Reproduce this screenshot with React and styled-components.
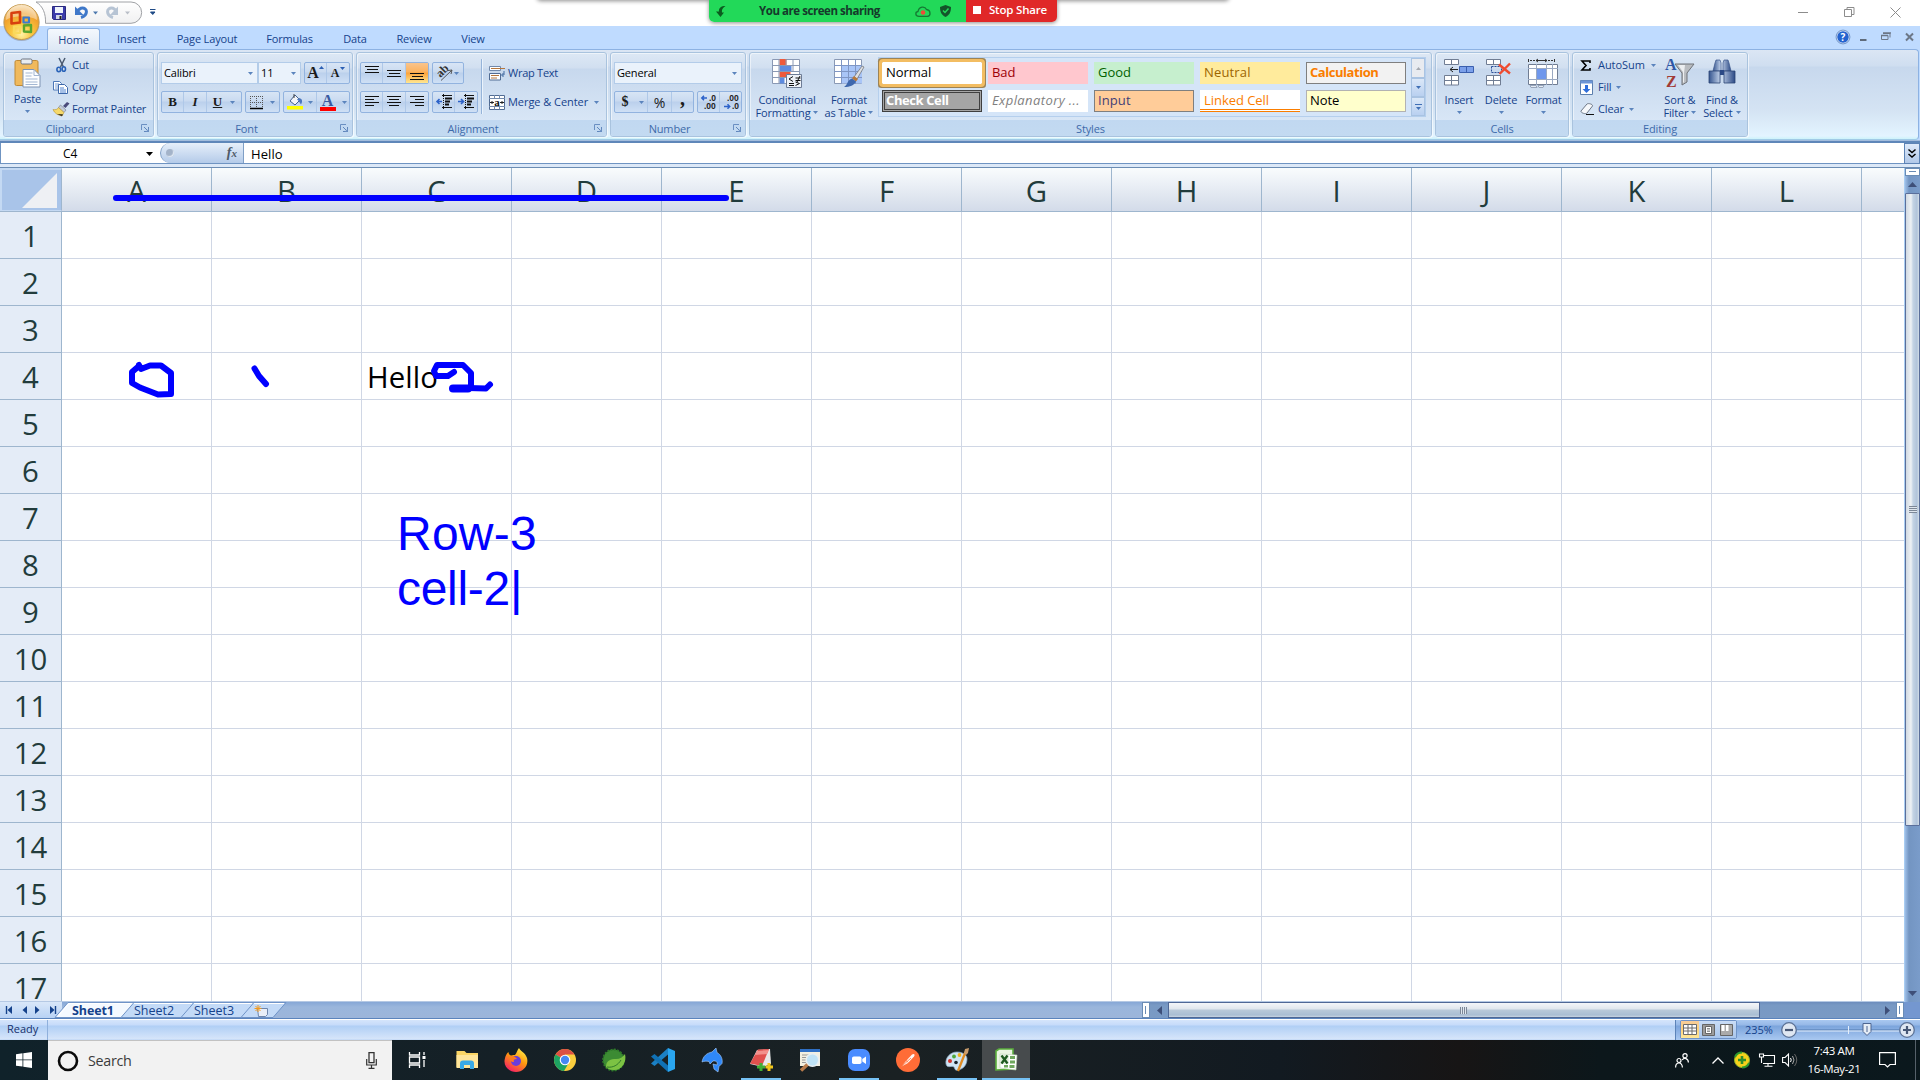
import React from "react";
import styled, { createGlobalStyle } from "styled-components";

const UI = `"Open Sans", "Noto Sans", sans-serif`;

const Global = createGlobalStyle`
  * { box-sizing: border-box; }
  body { margin: 0; background: #fff; overflow: hidden; font-family: ${UI}; }
  svg { display: block; flex: none; overflow: visible; }
`;

/* ---------- shell ---------- */
const Screen = styled.div`
  position: relative;
  width: 1920px;
  height: 1080px;
  display: flex;
  flex-direction: column;
  font-size: 11px;
  color: #15428b;
  overflow: hidden;
`;
const Label = styled.span`
  white-space: pre;
  line-height: 14px;
  letter-spacing: ${(p) => p.$ls ?? -0.15}px;
  color: ${(p) => p.$color || "inherit"};
`;

/* ---------- title bar ---------- */
const TitleBar = styled.div`
  height: 26px;
  flex: none;
  background: #fff;
  display: flex;
  align-items: flex-start;
  padding-left: 36px;
`;
const WindowControls = styled.div`
  margin-left: auto;
  display: flex;
  gap: 35px;
  padding: 7px 19px 0 0;
`;
const ShareShadow = styled.div`
  position: absolute;
  left: 538px;
  top: -6px;
  width: 690px;
  height: 6px;
  border-radius: 4px;
  box-shadow: 0 0 4px 1px rgba(0, 0, 0, 0.45);
`;
const ShareBar = styled.div`
  position: absolute;
  left: 709px;
  top: 0;
  height: 22px;
  width: 348px;
  display: flex;
  border-radius: 0 0 5px 5px;
  overflow: hidden;
  box-shadow: 0 1px 4px rgba(0, 0, 0, 0.45);
  font-size: 11.5px;
  font-weight: 600;
`;
const ShareGreen = styled.div`
  width: 257px;
  background: #22d959;
  display: flex;
  align-items: center;
  color: #153a2b;
  font-weight: 700;
  padding-left: 7px;
`;
const ShareText = styled.div`
  width: 161px;
  padding-left: 33px;
`;
const ShareRed = styled.div`
  flex: 1;
  background: #e02828;
  color: #fff;
  display: flex;
  align-items: center;
  padding: 0 0 2px 7px;
  gap: 8px;
`;
const StopSquare = styled.i`
  width: 8px;
  height: 8px;
  background: #fff;
`;
const OfficeButton = styled.div`
  position: absolute;
  left: 3px;
  top: 4px;
`;

/* ---------- ribbon ---------- */
const TabBar = styled.div`
  height: 23px;
  flex: none;
  background: #bfdbff;
  display: flex;
  align-items: flex-end;
  padding-left: 47px;
`;
const Tab = styled.div`
  height: 22px;
  width: ${(p) => p.$w}px;
  display: flex;
  align-items: center;
  justify-content: center;
  padding-top: ${(p) => (p.$active ? 0 : 1)}px;
  margin-bottom: ${(p) => (p.$active ? -1 : 0)}px;
  position: relative;
  z-index: 1;
  ${(p) =>
    p.$active &&
    `background: linear-gradient(#f4f8fd, #dde8f5); border: 1px solid #8db2e3; border-bottom: 0; border-radius: 3px 3px 0 0;`}
`;
const MdiControls = styled.div`
  margin-left: auto;
  display: flex;
  align-items: center;
  gap: 11px;
  padding-right: 6px;
  height: 24px;
`;
const HelpBadge = styled.div`
  margin-right: -2px;
`;
const MdiGlyph = styled.div`
  margin-left: 3px;
`;
const RibbonWrap = styled.div`
  height: 94px;
  flex: none;
  background: linear-gradient(#bfdbff 0 91px, #a3bddd 91px);
  border-bottom: 2px solid #5f87b9;
`;
const Ribbon = styled.div`
  width: 1919px;
  height: 91px;
  border: 1px solid #8db2e3;
  border-left: 0;
  border-bottom-color: #a0cbe6;
  border-radius: 0 4px 4px 0;
  background: linear-gradient(#dbe6f4, #cfdef0 16px, #c7d8ed 17px, #d4e3f3 60px, #e3f4ff 86px, #cdf3fb);
  padding: 2px 0 0 3px;
  display: flex;
  gap: 3px;
`;
const GroupBox = styled.div`
  width: ${(p) => p.$w}px;
  height: 85px;
  border: 1px solid #a9c3de;
  border-radius: 3px;
  box-shadow: inset 1px 1px 0 rgba(255, 255, 255, 0.5), 1px 1px 0 rgba(255, 255, 255, 0.6);
  background: linear-gradient(#dde8f5, #d1dff0 15px, #c7d8ed 16px, #d8e6f6 68px);
  display: flex;
  flex-direction: column;
  overflow: hidden;
`;
const GroupBody = styled.div`
  flex: 1;
  display: flex;
  padding-left: ${(p) => p.$pl || 0}px;
`;
const GroupFooter = styled.div`
  height: 16px;
  background: linear-gradient(#c1d8f1, #c3daf1);
  color: #3e6aaa;
  display: flex;
  align-items: center;
  padding-right: 4px;
`;
const FooterName = styled.div`
  flex: 1;
  text-align: center;
  padding-left: ${(p) => (p.$launcher ? 0 : 4)}px;
  padding-right: ${(p) => (p.$launcher ? 5 : 0)}px;
`;
const BigButton = styled.div`
  width: ${(p) => p.$w}px;
  padding-top: ${(p) => p.$pt ?? 5}px;
  margin-left: ${(p) => p.$ml || 0}px;
  display: flex;
  flex-direction: column;
  align-items: center;
`;
const BigIcon = styled.div`
  height: 32px;
  margin-bottom: 2px;
`;
const BigLine = styled.div`
  height: 13px;
  display: flex;
  align-items: center;
  gap: 3px;
  white-space: nowrap;
`;
const SmallRows = styled.div`
  display: grid;
  grid-auto-rows: 22px;
  padding-top: 1px;
  align-content: start;
  margin-left: ${(p) => p.$ml || 0}px;
`;
const SmallRow = styled.div`
  display: flex;
  align-items: center;
  height: 22px;
`;
const IconSlot = styled.div`
  width: ${(p) => p.$w || 20}px;
  display: flex;
  justify-content: flex-start;
`;
const Controls = styled.div`
  display: flex;
  flex-direction: column;
  gap: 7px;
  padding-top: 9px;
`;
const ControlRow = styled.div`
  display: flex;
  gap: ${(p) => p.$gap ?? 3}px;
  height: 22px;
`;
const Combo = styled.div`
  width: ${(p) => p.$w}px;
  height: 22px;
  background: #eaf2fb;
  border: 1px solid #b3cce9;
  margin-right: ${(p) => p.$mr || 0}px;
  color: #000;
  display: flex;
  align-items: center;
  justify-content: space-between;
  padding: 0 4px 0 2px;
`;
const ButtonGroup = styled.div`
  display: flex;
  height: 22px;
  border: 1px solid #92b3df;
  border-radius: 2px;
  background: linear-gradient(#d8e5f5, #c9daf0 9px, #bbd0ec 10px, #cfe0f5);
`;
const ToolButton = styled.div`
  width: ${(p) => p.$w}px;
  display: flex;
  align-items: center;
  justify-content: center;
  gap: ${(p) => p.$gap ?? 4}px;
  padding-left: ${(p) => p.$pl || 0}px;
  padding-bottom: ${(p) => p.$pb || 0}px;
  border-right: 1px solid #afc8e8;
  color: #1b1b1b;
  font: ${(p) => p.$font || "bold 13px 'Liberation Serif', serif"};
  background: ${(p) => (p.$on ? "linear-gradient(#f9c48d, #fdb25c 9px, #fca33a 10px, #ffe791)" : "none")};
  &:last-child { border-right: 0; }
`;
const Divider = styled.div`
  width: 2px;
  height: 55px;
  margin: 6px 6px 0 3px;
  background: #96b4d9;
  border-right: 1px solid #eaf3fc;
`;
const WrapColumn = styled.div`
  display: flex;
  flex-direction: column;
  gap: 7px;
  padding-top: 9px;
`;
const Gallery = styled.div`
  display: flex;
  width: 548px;
  height: 60px;
  margin: 4px 0 0 1px;
  background: #d5e5f8;
  border: 1px solid #b5cfed;
`;
const Swatches = styled.div`
  display: grid;
  grid-template-columns: repeat(5, 100px);
  grid-auto-rows: 22px;
  gap: 6px;
  padding: 4px 0 0 3px;
  width: 532px;
  font-size: 13px;
`;
const Swatch = styled.div`
  background: ${(p) => p.$bg};
  color: ${(p) => p.$fg};
  border: ${(p) => p.$border || "1px solid transparent"};
  outline: ${(p) => p.$outline || "none"};
  box-shadow: ${(p) => p.$shadow || "none"};
  border-radius: ${(p) => p.$radius || 0}px;
  font-weight: ${(p) => p.$weight || 400};
  font-style: ${(p) => p.$style || "normal"};
  padding: 0 0 ${(p) => p.$pb ?? 2}px ${(p) => p.$pl ?? 3}px;
  display: flex;
  align-items: center;
  white-space: nowrap;
  line-height: 18px;
`;
const GalleryScroll = styled.div`
  width: 14px;
  display: grid;
  grid-template-rows: 20px 19px 19px;
`;
const ScrollCell = styled.div`
  border: 1px solid #a9c3e2;
  background: ${(p) => (p.$off ? "#e8ebf0" : "linear-gradient(#dbe8f8, #b9d0f0)")};
  display: flex;
  align-items: center;
  justify-content: center;
`;

/* ---------- formula bar ---------- */
const FormulaBar = styled.div`
  height: 25px;
  flex: none;
  background: #dce8f7;
  border-bottom: 1px solid #6b8cb3;
  padding-bottom: 3px;
  display: flex;
`;
const NameBox = styled.div`
  width: 160px;
  background: #fff;
  border-left: 1px solid #6f94c2;
  border-bottom: 1px solid #6f94c2;
  color: #000;
  display: flex;
  align-items: center;
  font-size: 12px;
  padding: 2px 7px 0 62px;
  justify-content: space-between;
`;
const FxArea = styled.div`
  width: 84px;
  background: #fff;
  border-bottom: 1px solid #6f94c2;
`;
const FxPill = styled.div`
  width: 84px;
  height: 20px;
  border: 1px solid #7f9fc6;
  border-width: 0 1px 0 1px;
  border-radius: 10px 0 0 10px;
  background: linear-gradient(#e6effa, #b4cbe9);
  display: flex;
  align-items: center;
  justify-content: space-between;
  padding: 0 6px 0 5px;
  font: italic bold 14px "Liberation Serif", serif;
  color: #4f5a68;
`;
const FxSub = styled.span`
  font-size: 11px;
`;
const FxDot = styled.i`
  width: 8px;
  height: 8px;
  border-radius: 50%;
  background: #a3b3c9;
  box-shadow: inset -1px -1px 1px #e3ebf5;
`;
const FormulaInput = styled.div`
  flex: 1;
  background: #fff;
  border-bottom: 1px solid #6f94c2;
  color: #000;
  font-size: 13px;
  display: flex;
  align-items: center;
  padding: 1px 0 0 7px;
`;
const ExpandButton = styled.div`
  width: 16px;
  height: 21px;
  border: 1px solid #5d83b5;
  background: linear-gradient(#dfeafa, #b1c8e8);
  display: flex;
  align-items: center;
  justify-content: center;
`;

/* ---------- sheet ---------- */
const SheetArea = styled.div`
  height: 834px;
  flex: none;
  display: flex;
`;
const Grid = styled.div`
  width: 1904px;
  height: 834px;
  overflow: hidden;
  font-size: 29.33px;
  color: #223c3c;
  border-bottom: 1px solid #b5c9e4;
`;
const HeaderRow = styled.div`
  display: flex;
  height: 44px;
  background: linear-gradient(#f9fcfd, #d3dbe9);
  border-bottom: 1px solid #9eb6ce;
`;
const Corner = styled.div`
  width: 62px;
  border: 2px solid #c4d9f3;
  border-bottom-width: 1px;
  background: #a9c4e9;
  border-right: 1px solid #9eb6ce;
`;
const ColumnHead = styled.div`
  width: 150px;
  flex: none;
  border-right: 1px solid #9eb6ce;
  display: flex;
  align-items: center;
  justify-content: center;
  line-height: 40px;
  padding-top: 2px;
`;
const GridRow = styled.div`
  display: flex;
  height: 47px;
`;
const RowHead = styled.div`
  width: 62px;
  flex: none;
  background: #e4ecf7;
  border-right: 1px solid #9eb6ce;
  border-bottom: 1px solid #9eb6ce;
  display: flex;
  align-items: center;
  justify-content: center;
  line-height: 38px;
  padding-top: 1px;
`;
const Cell = styled.div`
  width: 150px;
  flex: none;
  border-right: 1px solid #d0d7e5;
  border-bottom: 1px solid #d0d7e5;
  background: #fff;
  color: #000;
  padding: 1px 0 0 5px;
  display: flex;
  align-items: center;
  line-height: 38px;
  letter-spacing: 0.1px;
`;
const VScroll = styled.div`
  width: 16px;
  background: linear-gradient(90deg, #9ebfe8, #7395c2 4px, #7a9cca);
  display: flex;
  flex-direction: column;
  align-items: center;
  border-left: 1px solid #a9cdf2;
`;
const VSplit = styled.div`
  width: 15px;
  height: 8px;
  border: 1px solid #6a8cb5;
  background: #fff;
  padding: 2px 3px;
  display: flex;
  &::after { content: ""; flex: 1; border: 1px solid #6a8cb5; border-width: 1px 0 0; }
`;
const ArrowSlot = styled.div`
  height: ${(p) => p.$h}px;
  width: ${(p) => p.$w}px;
  display: flex;
  align-items: center;
  justify-content: center;
`;
const VThumb = styled.div`
  width: 15px;
  height: 633px;
  border: 1px solid #5b6f9b;
  border-radius: 1px;
  background: linear-gradient(90deg, #d2dae2, #edf1f5 5px, #c4d3e4 7px, #b0c3da 11px, #d5dfe9);
  display: flex;
  align-items: center;
  justify-content: center;
`;
const GripV = styled.i`
  width: 8px;
  height: 7px;
  background: repeating-linear-gradient(#7c8797 0 1px, #dfe6ee 1px 2px);
`;
const GripH = styled.i`
  width: 7px;
  height: 7px;
  margin-right: 1px;
  background: repeating-linear-gradient(90deg, #7c8797 0 1px, #dfe6ee 1px 2px);
`;

/* ---------- sheet tabs ---------- */
const TabStrip = styled.div`
  height: 17px;
  flex: none;
  display: flex;
  background: linear-gradient(#86a7d6, #9ab6dc 5px, #9cb5da);
  border-bottom: 1px solid #5b84bd;
  font-size: 12.5px;
`;
const SheetNav = styled.div`
  width: 62px;
  display: flex;
  align-items: center;
  justify-content: space-between;
  padding: 0 5px;
  background: linear-gradient(#d9e7f9, #b8d2f4);
`;
const SheetTab = styled.div`
  position: relative;
  width: ${(p) => p.$w}px;
  display: flex;
  align-items: center;
  padding: 1px 0 0 ${(p) => p.$pl}px;
  font-weight: ${(p) => (p.$on ? 700 : 400)};
  z-index: ${(p) => p.$z};
`;
const TabShape = styled.svg`
  position: absolute;
  left: 0;
  top: 0;
  z-index: -1;
`;
const HScroll = styled.div`
  margin-left: auto;
  width: 778px;
  height: 16px;
  display: flex;
  background: linear-gradient(#6c8cbc, #7899c4 3px, #7a9ac4);
`;
const HSplit = styled.div`
  width: 8px;
  border: 1px solid #6a8cb5;
  background: #fff;
  padding: 3px 0 3px 2px;
  display: flex;
  &::after { content: ""; width: 1px; background: #6a8cb5; }
`;
const HThumb = styled.div`
  width: 592px;
  border: 1px solid #4f6795;
  background: linear-gradient(#f4f6f9, #e0e6ed 6px, #b9c9d9 7px, #a9bdd3 12px, #c8d4e1);
  display: flex;
  align-items: center;
  justify-content: center;
`;
const CornerFill = styled.div`
  width: 16px;
  background: #7497d0;
`;

/* ---------- status bar ---------- */
const StatusBar = styled.div`
  height: 21px;
  flex: none;
  display: flex;
  border-top: 1px solid #fff;
  background: linear-gradient(#d5e5fb, #c6dbfa 5px, #b0cff5 6px, #d6e5fa 19px, #b9d2f3 20px);
`;
const StatusText = styled.div`
  width: 48px;
  padding: 0 0 2px 7px;
  color: #15306b;
  display: flex;
  align-items: center;
  border-right: 1px solid #8fb0dc;
`;
const StatusRight = styled.div`
  margin-left: auto;
  width: 245px;
  display: flex;
  align-items: center;
  background: linear-gradient(#a9c8f0, #96b8e7 5px, #7ba4dc 6px, #a9c8f1);
  border-left: 1px solid #5c83b8;
  padding: 0 0 1px 4px;
`;
const ViewButtons = styled.div`
  display: flex;
  height: 19px;
  border: 1px solid #6f93c7;
  border-radius: 2px;
`;
const ViewButton = styled.div`
  width: 18.33px;
  display: flex;
  align-items: center;
  justify-content: center;
  background: ${(p) => (p.$on ? "linear-gradient(#f6cc9b, #ffd27a 8px, #fde79a)" : "linear-gradient(#c9dcf5, #a9c6ec)")};
`;
const Zoom = styled.div`
  width: 44px;
  padding: 0 0 1px 8px;
`;

/* ---------- task bar ---------- */
const TaskBar = styled.div`
  height: 40px;
  flex: none;
  display: flex;
  color: #fff;
  background: linear-gradient(90deg, #10222a 0, #152026 500px, #1a2123 900px, #121a21 1280px, #171515 1460px, #0c171b 1600px, #0b181d);
`;
const StartButton = styled.div`
  width: 48px;
  display: flex;
  align-items: center;
  justify-content: center;
`;
const SearchBox = styled.div`
  width: 344px;
  background: #f2f2f2;
  border-top: 1px solid #c2c2c2;
  color: #3b3b3b;
  font-size: 14.3px;
  display: flex;
  align-items: center;
  padding: 0 15px 0 9px;
`;
const SearchText = styled.div`
  flex: 1;
  padding-left: 9px;
  letter-spacing: -0.3px;
`;
const Tasks = styled.div`
  display: flex;
  gap: 1px;
`;
const Task = styled.div`
  width: ${(p) => (p.$wide ? 49 : 48)}px;
  height: 40px;
  display: flex;
  align-items: center;
  justify-content: center;
  background: ${(p) => (p.$active ? "#474b4d" : "none")};
  box-shadow: ${(p) => (p.$active ? "inset 0 -2px #76c2f5" : "none")};
  ${(p) =>
    p.$running &&
    `background: linear-gradient(#76c2f5, #76c2f5) 4px 38px / 40px 2px no-repeat;`}
  &:first-child { margin-right: 1px; }
`;
const Tray = styled.div`
  margin-left: auto;
  display: flex;
  align-items: center;
  width: 245px;
`;
const TraySlot = styled.div`
  width: ${(p) => p.$w}px;
  margin-right: ${(p) => p.$mr || 0}px;
  display: flex;
  justify-content: center;
`;
const Clock = styled.div`
  width: 72px;
  text-align: center;
  font-size: 11.5px;
  line-height: 18px;
  letter-spacing: -0.35px;
  white-space: nowrap;
  padding-bottom: 1px;
`;
const DesktopEdge = styled.i`
  margin-left: auto;
  width: 5px;
  height: 40px;
  border-left: 1px solid #56616a;
`;

/* ---------- annotation layer ---------- */
const Ink = styled.svg`
  position: absolute;
  left: 0;
  top: 0;
  pointer-events: none;
`;
const InkText = styled.div`
  position: absolute;
  left: 397px;
  top: 506px;
  font: 48px/55px "Liberation Sans", Arial, sans-serif;
  color: #0000ff;
  white-space: pre;
`;
const InkLine = styled.div`
  letter-spacing: ${(p) => p.$ls}px;
`;

/* ---------- drawings ---------- */
const Svg = ({ w, h, children, ...rest }) => (
  <svg width={w} height={h} viewBox={`0 0 ${w} ${h}`} {...rest}>{children}</svg>
);
const Caret = ({ c = "#5b84bd" }) => (
  <Svg w={5} h={3}><path d="M0 0h5L2.500 3z" fill={c} /></Svg>
);
const Launcher = () => (
  <Svg w={8} h={8}>
    <path d="M.5 6V.5H6" fill="none" stroke="#6a8fc2" />
    <path d="M3 3l3 3M7.500 3v4.500H3" fill="none" stroke="#5f86bb" />
    <path d="M4.500 8h3.500V4.500z" fill="#6a8fc2" />
  </Svg>
);
const Lines = ({ rows, w = 14, h = 16 }) => (
  <Svg w={w} h={h}>
    {rows.map(([x, y, l]) => <path key={y} d={`M${x} ${y + 0.5}h${l}`} stroke="#111" />)}
  </Svg>
);
const OfficeOrb = () => (
  <Svg w={37} h={38}>
    <defs>
      <radialGradient id="orb" cx=".5" cy=".85" r=".85">
        <stop offset="0" stopColor="#fff3a6" /><stop offset=".35" stopColor="#f9c63f" />
        <stop offset=".7" stopColor="#f0a02c" /><stop offset="1" stopColor="#f6d9a8" />
      </radialGradient>
    </defs>
    <circle cx="18.500" cy="19" r="18" fill="#8a8f99" opacity=".6" />
    <circle cx="18.500" cy="18" r="17.500" fill="url(#orb)" stroke="#c79a4c" />
    <path d="M3 16a15.500 15.500 0 0 1 31 0c-8-5-23-5-31 0z" fill="#fff" opacity=".4" />
    <g fill="none" strokeLinejoin="round">
      <path d="M8.500 9l8.500-1v10.500l-8.500 1z" stroke="#d8400f" strokeWidth="2.600" />
      <path d="M20.500 13.500h5.500v5h-5.500z" stroke="#3b7ad0" strokeWidth="2.200" />
      <path d="M11 22.500h6v6.500h-6z" stroke="#f9da5c" strokeWidth="2.200" />
      <path d="M21 21.500l7-.5v7l-7-.5z" stroke="#5aa52f" strokeWidth="2.400" />
    </g>
  </Svg>
);
const QuickAccess = () => (
  <Svg w={125} h={24}>
    <defs>
      <linearGradient id="qa" x2="0" y2="1"><stop offset="0" stopColor="#fff" /><stop offset="1" stopColor="#f0f0f1" /></linearGradient>
    </defs>
    <path d="M0 2H95a10.500 10.500 0 0 1 0 21.300H9.500C10 14 7 6 0 2z" fill="url(#qa)" stroke="#a0a2a6" />
    <path d="M16.500 6.500h13v13h-12l-1-1z" fill="#3c3cab" stroke="#2a2a80" />
    <path d="M19 7h8v6h-8z" fill="#eef3fb" /><path d="M20 15h6v4h-6z" fill="#d3d8e8" /><path d="M23.500 16h2v3h-2z" fill="#222" />
    <path d="M45 17.500c7-2 7.500-10.500 0-9.300l-3.500 2.300" fill="none" stroke="#3f78c9" strokeWidth="3" />
    <path d="M39 6.500v8.500h8.500z" fill="#3f78c9" />
    <path d="M57 11.500h5l-2.500 3z" fill="#4c78ad" />
    <path d="M77 17.500c-7-2-7.500-10.500 0-9.300l2.500 1.800" fill="none" stroke="#b7c4d4" strokeWidth="3" />
    <path d="M82 6.500v8.500h-8z" fill="#b7c4d4" />
    <path d="M89 11.500h5l-2.500 3z" fill="#b9bec7" />
    <path d="M114 9.500h5.500M114.500 12h4.500l-2.250 2.500z" stroke="#1f4a86" fill="#1f4a86" />
  </Svg>
);
const PasteIcon = () => (
  <Svg w={28} h={32}>
    <rect x="1" y="2.500" width="23" height="25" rx="1.500" fill="#f0b95c" stroke="#c08a35" />
    <rect x="7" y="1" width="11" height="5" rx="1.500" fill="#e9ecf0" stroke="#6e7580" />
    <path d="M9 11.500h11l6 6V29H9z" fill="#fdfeff" stroke="#7e94b3" />
    <path d="M20 11.500v6h6M11.500 15h7M11.500 18h6M11.500 21h12M11.500 24h12M11.500 26.500h12" stroke="#a3b7d3" fill="none" />
  </Svg>
);
const CutIcon = () => (
  <Svg w={14} h={15}>
    <path d="M3 0l4.500 9M9 0L4.500 9" stroke="#4a5a70" strokeWidth="1.500" />
    <ellipse cx="2.800" cy="11.500" rx="1.900" ry="2.200" fill="none" stroke="#2a63b8" strokeWidth="1.600" />
    <ellipse cx="7.800" cy="11" rx="1.700" ry="2.300" fill="none" stroke="#2a63b8" strokeWidth="1.600" />
  </Svg>
);
const CopyIcon = () => (
  <Svg w={16} h={14}>
    <path d="M.5 1.500h6l2 2v6.500h-8z" fill="#fff" stroke="#4d78b8" />
    <path d="M2 4h4M2 6h4M2 8h3" stroke="#7da0d4" />
    <path d="M5.500 4.500h6l3 3v6h-9z" fill="#fff" stroke="#3d68ab" />
    <path d="M7 8h4M7 10h6M7 12h6" stroke="#4f82cf" />
  </Svg>
);
const PainterIcon = () => (
  <Svg w={17} h={15}>
    <path d="M10 4l4-4 2.500 1.500-4 4.500z" fill="#4a4a7a" />
    <path d="M7.500 3l5.500 5-2 2.500L5.500 5.500z" fill="#c6ccd8" stroke="#707a8c" strokeWidth=".6" />
    <path d="M5.500 5.500c-1 2-3 2.500-5.500 2 1.500 4 5 5.500 9 6.500l2-3.500z" fill="#f6d96a" stroke="#b79332" strokeWidth=".6" />
    <path d="M4 12l5 2.300 1-2z" fill="#3b3424" />
  </Svg>
);
const BorderIcon = () => (
  <Svg w={13} h={13}>
    <path d="M.5 0v12M6.500 0v12M12.500 0v12M0 .5h13M0 6.500h13" stroke="#555" strokeDasharray="1 1" />
    <path d="M0 12.500h13" stroke="#000" strokeWidth="1.500" />
  </Svg>
);
const FillIcon = () => (
  <Svg w={16} h={16}>
    <path d="M3 7l5-6 5 5-5 5z" fill="#f2f4f8" stroke="#44608c" />
    <path d="M7 0v4" stroke="#444" /><path d="M12 4c4 1 3.500 4 2 6.500-1.500-2-2-4-4-5z" fill="#4a76bd" />
    <path d="M0 12h16v3.500H0z" fill="#ffff00" />
  </Svg>
);
const FontColour = styled.span`
  font: bold 16px/12px "Liberation Serif", serif;
  color: #3a5aa0;
  border-bottom: 4px solid #ff0000;
  width: 16px;
  text-align: center;
  height: 16px;
  margin-top: 1px;
`;
const OrientIcon = () => (
  <Svg w={16} h={16}>
    <path d="M4 15.500L15 5M15 5l-1 4M15 5l-4 .5" stroke="#555" fill="none" />
    <text x="0" y="0" fontSize="12" fontWeight="700" fontFamily="Liberation Serif, serif" transform="translate(3.500 13) rotate(-45)" fill="#333">ab</text>
  </Svg>
);
const IndentIcon = ({ right }) => (
  <Svg w={16} h={16}>
    <path d="M6 1.500h10M6 13.500h10" stroke="#111" />
    <path d="M9 4.500h7M9 7.500h5M9 10.500h4" stroke="#111" strokeWidth="2" />
    <path d="M7.500 0v16" stroke="#111" strokeDasharray="1 1" />
    <path d={right ? "M0 7.500h5M3 5l2.500 2.500L3 10" : "M6 7.500H1M3.500 5L1 7.500 3.500 10"} stroke="#2c62c9" fill="none" strokeWidth="1.600" />
  </Svg>
);
const WrapIcon = () => (
  <Svg w={16} h={15}>
    <path d="M.5.500h11v4H.5z" fill="#fff" stroke="#7189ab" /><path d="M2 2.500h14" stroke="#b5763c" />
    <path d="M.5 7.500h11v6.500H.5z" fill="#fff" stroke="#516c94" /><path d="M2 9.500h8M2 12h6" stroke="#b5763c" />
    <path d="M15 5v4h-2M14.500 7l-2 2 2 2" stroke="#41689f" fill="none" />
  </Svg>
);
const MergeIcon = () => (
  <Svg w={16} h={15}>
    <path d="M.5.500h15v14H.5z" fill="#fff" stroke="#516c94" />
    <path d="M0 3.500h16M0 11.500h16M5.500 0v3.500M10.500 0v3.500M5.500 11.500v3M10.500 11.500v3" stroke="#7189ab" />
    <path d="M1 7.500h4M11 7.500h4M3 6v3M13 6v3" stroke="#222" />
    <text x="5.200" y="10.500" fontSize="11" fontWeight="700" fontFamily="Liberation Serif, serif" fill="#111">a</text>
  </Svg>
);
const DecimalIcon = ({ inc }) => (
  <Svg w={16} h={15}>
    <g fontSize="8.500" fontWeight="700" fontFamily="Liberation Sans, sans-serif" fill="#222">
      <text x={inc ? 8 : 4} y="6">{inc ? ".0" : ".00"}</text>
      <text x={inc ? 3 : 9} y="14">{inc ? ".00" : ".0"}</text>
    </g>
    <path d={inc ? "M6 3H1M3 .8L.8 3 3 5.200" : "M1 11.500h5.500M4.500 9.300l2.200 2.200-2.200 2.200"} stroke="#2c62c9" fill="none" strokeWidth="1.500" />
  </Svg>
);
const CondIcon = () => (
  <Svg w={30} h={29}>
    <path d="M.5.500h27v24H.5z" fill="#fff" stroke="#8a99b4" />
    <path d="M7.500 0h7v6h-7zM7.500 12h11v6h-11z" fill="#ee5a3c" /><path d="M7.500 6h12v6h-12zM7.500 18.500h5v6h-5z" fill="#5d8be0" />
    <path d="M0 6.500h28M0 12.500h28M0 18.500h28M7 0v25M14 0v6M21 0v12" stroke="#8a99b4" fill="none" />
    <path d="M14.500 15.500h15v13h-15z" fill="#eef2f8" stroke="#6d7c96" />
    <path d="M21 17.500l-4 2.500 4 2.500M17 24.500h5M17 26.500h5M23.500 19h5M23.500 21.500h5M28 17l-3 6M23.500 23l4 1.500-4 2" stroke="#111" fill="none" />
  </Svg>
);
const TableIcon = () => (
  <Svg w={31} h={29}>
    <path d="M.5.500h27v24H.5z" fill="#fff" stroke="#8a99b4" />
    <path d="M7 6.500h21v18H7z" fill="#a9c5f7" />
    <path d="M0 6.500h28M0 12.500h28M0 18.500h28M7.500 0v25M14.500 0v25M21.500 0v25" stroke="#7f96c4" />
    <path d="M28 7l2 1-7 12-3-2z" fill="#dcdfe4" stroke="#6d6d6d" strokeWidth=".7" />
    <path d="M20 17l4 3-2 2.500-4-3z" fill="#b8793a" />
    <path d="M18 19.500l4 3c-2 4-6 5.500-12 5.500 4-2 3-7 8-8.500z" fill="#3f68ad" />
  </Svg>
);
const InsertIcon = ({ del }) => (
  <Svg w={30} h={27}>
    <path d="M.5.500h14v5H.5zM7.500.5v5M.5 16.500h14v9.500H.5zM7.500 16.500v9.500M.5 21.500h14" fill="#fff" stroke="#707d93" />
    {del ? (
      <>
        <path d="M5.500 7.500h10v6h-10z" fill="none" stroke="#2b4f97" strokeDasharray="2 1" />
        <path d="M13 5.500l11 9M24 4.500L13.500 15" stroke="#ef4a2f" strokeWidth="2.400" />
      </>
    ) : (
      <>
        <path d="M15.500 7.500h14v6h-14zM22.500 7.500v6" fill="#7ba0ea" stroke="#3a5fae" />
        <path d="M14 10.500H6M9 8l-3 2.500L9 13" stroke="#222" fill="none" />
      </>
    )}
  </Svg>
);
const FormatIcon = () => (
  <Svg w={31} h={29}>
    <path d="M.5 0v3M26.500 0v3" stroke="#333" /><path d="M2 1.500h23" stroke="#333" strokeDasharray="2 1" />
    <path d="M8 1.500h11M10 0L8 1.500 10 3M17 0l2 1.500L17 3" stroke="#333" fill="none" />
    <path d="M.5 5.500h29v20H.5z" fill="#fff" stroke="#707d93" />
    <path d="M9 10h9v11H9z" fill="#6f97ec" />
    <path d="M0 9.500h30M0 20.500h30M8.500 5v21M18.500 5v21M24.500 5v21" stroke="#9aa9c2" />
    <path d="M2 26.500h6l1 2H3zM10 26.500h6l-1 2h-4z" fill="#e7edf6" stroke="#8795ad" strokeWidth=".8" />
  </Svg>
);
const FillDown = () => (
  <Svg w={13} h={15}>
    <path d="M.5.500h12v14H.5z" fill="#fff" stroke="#5c7fae" /><path d="M.5.500h12v3H.5z" fill="#6d95d6" />
    <path d="M5 5h3v4h2.500l-4 4-4-4H5z" fill="#2f6edb" />
  </Svg>
);
const EraserIcon = () => (
  <Svg w={14} h={12}>
    <path d="M1 8l6-7c1-1 6 0 5.500 2L7 10c-1 1.500-6.500 0-6-2z" fill="#f6f8fb" stroke="#6c7787" />
    <path d="M6 11.500h8" stroke="#111" />
  </Svg>
);
const SortIcon = () => (
  <Svg w={30} h={29}>
    <g fontFamily="Liberation Serif, serif" fontWeight="700" fontSize="16">
      <text x="0" y="11" fill="#2f57a5">A</text><text x="1" y="28" fill="#a13a35">Z</text>
    </g>
    <path d="M10 5h19l-7 9v9l-5 3V14z" fill="#b9bcc0" stroke="#6f7378" /><path d="M13 6h7l-1 8v9l-1 1V13z" fill="#eceef0" />
  </Svg>
);
const BinocularIcon = () => (
  <Svg w={28} h={26}>
    <defs><linearGradient id="bn"><stop offset="0" stopColor="#35558f" /><stop offset=".45" stopColor="#c9d8ee" /><stop offset="1" stopColor="#2c4a86" /></linearGradient></defs>
    <path d="M7 4l1-3h4l1 3v8H5zM15 4l1-3h4l1 3 2 8h-8z" fill="url(#bn)" stroke="#3c588c" strokeWidth=".7" />
    <path d="M1 12h11v12H1zM16 12h11v12H16z" fill="url(#bn)" stroke="#2c4474" strokeWidth=".8" />
    <path d="M12 11h4v5h-4z" fill="#2c4a86" />
  </Svg>
);
const NavArrow = ({ flip, bar }) => (
  <Svg w={8} h={8}>
    <g transform={flip ? "translate(8 0) scale(-1 1)" : undefined}>
      {bar && <path d="M1.500 0v8" stroke="#15428b" strokeWidth="1.400" />}
      <path d="M7 0v8L2.500 4z" fill="#15428b" />
    </g>
  </Svg>
);
const NewSheetIcon = () => (
  <Svg w={15} h={12}>
    <path d="M3.500 3.500h10v6l-2 2h-7z" fill="#e8eef8" stroke="#6d86ad" />
    <path d="M4 0v7M.5 3.500h7M1.500 1l5 5M6.500 1l-5 5" stroke="#f29a1e" />
  </Svg>
);
const RoundZoom = ({ plus }) => (
  <Svg w={16} h={16}>
    <circle cx="8" cy="8" r="7.300" fill="#dfe7f2" stroke="#5c7296" strokeWidth="1.300" />
    <path d={plus ? "M4 8h8M8 4v8" : "M4 8h8"} stroke="#485876" strokeWidth="2.200" />
  </Svg>
);

/* ---------- task bar logos (24 x 24) ---------- */
const logos = {
  view: (
    <g fill="none" stroke="#fff" strokeWidth="1.300" transform="translate(4 4)">
      <path d="M.5 0v3h10V0M.5 5h10v6H.5zM.5 16v-3h10v3M15 0v3M15 8v7" /><path d="M13.500 4h3v3h-3z" fill="#fff" stroke="none" />
    </g>
  ),
  folder: (
    <g><path d="M1.500 3h8l2 2H23v14H1.500z" fill="#fbd565" /><path d="M1.500 7H23v13H1.500z" fill="#ffe59a" />
      <path d="M5 21v-5.500a3 3 0 0 1 3-3h8a3 3 0 0 1 3 3V21h-4v-4H9v4z" fill="#39a9e6" /></g>
  ),
  firefox: (
    <g>
      <defs><linearGradient id="ff" x1=".8" x2=".2" y2="1"><stop offset="0" stopColor="#fff04a" /><stop offset=".45" stopColor="#ff980e" /><stop offset="1" stopColor="#f5156c" /></linearGradient></defs>
      <path d="M15 0c1 3 6 4 8 10 2 8-4 14-11 14S-1 18 .8 11C1.300 8 3 5 4.500 4c0 2 1 3 2.500 3.500C9 7 10 7 11 7c2-2 2-5 4-7z" fill="url(#ff)" />
      <circle cx="12" cy="13" r="5" fill="#6a3ddb" /><path d="M6 9c3-2 6 0 7 2-3 0-4 1-3 3-3 0-5-2-4-5z" fill="#ff7b1e" />
    </g>
  ),
  chrome: (
    <g>
      <circle cx="12" cy="12" r="11" fill="#fbce3e" />
      <path d="M12 12L2.500 6.500A11 11 0 0 1 21.500 6.500H12z" fill="#dd5044" />
      <path d="M12 12L2.500 6.500A11 11 0 0 0 11 23l5-8.500z" fill="#1da362" />
      <circle cx="12" cy="12" r="5.300" fill="#fff" /><circle cx="12" cy="12" r="4.200" fill="#4688f4" />
    </g>
  ),
  spring: (
    <g><circle cx="11.500" cy="12" r="10.500" fill="#3c8b33" stroke="#2f7a2a" strokeWidth="1.800" strokeDasharray="2 1.300" />
      <path d="M23 6c2 8-3 16-11 16-4 0-6-1-8-3 0-7 5-8 10-8 4 0 7-2 9-5z" fill="#7cc243" /><path d="M5 19c6 1 11-2 14-7" stroke="#2f7a2a" fill="none" /></g>
  ),
  vscode: (
    <g><path d="M17 0l7 3v18l-7 3z" fill="#2aa6f0" /><path d="M17 0v6.500L3.500 18 0 15.500z" fill="#1b80c4" /><path d="M17 24v-6.500L3.500 6 0 8.500z" fill="#1071b5" /></g>
  ),
  dolphin: (
    <path d="M2 14c1-6 5-9 10-10l4-4 1 4.500c4 2 6 7 5 11l-3 3-1 5.500-4-3-1-5 4 1c1-3-1-4.500-4-4l-3 3-1-2.500C6 13 4 13 2 14z" fill="#2f88f8" stroke="#a9cdf8" strokeWidth=".6" />
  ),
  notepad: (
    <g><path d="M8 2l13-1 1 15-8 3-13-3z" fill="#e9e9e9" /><path d="M9 1.500L20 1 13 18 1 15.500z" fill="#e0514e" /><path d="M8 3l12-1-2 4-12 1z" fill="#f3918c" />
      <path d="M12 15v8M8 19h8" stroke="#3fae34" strokeWidth="3" /><path d="M20 15v8M16.500 19h7.500" stroke="#efc51b" strokeWidth="3" /></g>
  ),
  magnify: (
    <g><path d="M2 1h20v17H2z" fill="#f3efe0" /><path d="M2 1h20v3H2z" fill="#2f6fc4" /><path d="M4 7h8M4 9.500h8M4 12h6M4 14.500h5" stroke="#999" />
      <circle cx="14.500" cy="12" r="6.300" fill="#bfe2f6" stroke="#e8eef2" strokeWidth="1.600" /><path d="M9.500 16.500L3 22.500" stroke="#b87b4b" strokeWidth="3.500" /></g>
  ),
  zoom: (
    <g><rect x="1" y="1" width="22" height="22" rx="7" fill="#4a8cff" /><rect x="5" y="8.500" width="9.500" height="7.500" rx="1.800" fill="#fff" /><path d="M15.300 11l3.700-2.500V16l-3.700-2.500z" fill="#fff" /></g>
  ),
  postman: (
    <g><circle cx="12" cy="12" r="12" fill="#ff6c37" /><path d="M5.500 18.500L10 13l6-6.500c2-1.500 3.500 0 2 2L12 15z" fill="#fff" opacity=".95" /><path d="M6 18l9-8M10 12.500l2.500 2" stroke="#ff6c37" strokeWidth=".8" /></g>
  ),
  paint: (
    <g><path d="M12 4C5 4 0 10 1 16c1 5 6 1 8 3 1 2 1 4 4 3 6-1 9-6 9-11 0-4-4-7-10-7z" fill="#cfe4f3" stroke="#8ba8c2" strokeWidth=".7" />
      <circle cx="5" cy="13" r="2" fill="#d3332b" /><circle cx="9" cy="8.500" r="1.900" fill="#4ea83b" /><circle cx="14.500" cy="7" r="1.900" fill="#f0b11e" /><circle cx="11" cy="14.500" r="1.800" fill="#17222a" />
      <path d="M20.500 4L13 23" stroke="#e08c24" strokeWidth="2.300" /><path d="M19 5l1-4 4-1-1 5-2 2z" fill="#c99c6c" /></g>
  ),
  excel: (
    <g><path d="M2 3l3-2h14v20l-17 1z" fill="#eaf5e2" stroke="#5bae3d" strokeWidth="1.600" />
      <path d="M6 6l17 1-1 15-16-2z" fill="#fff" stroke="#b9d0ae" strokeWidth=".6" />
      <path d="M16 8h5v3h-5zM16 12.500h5v3h-5zM15.500 17h5v3h-5zM10 17h4v2.500h-4z" fill="#6fa85d" />
      <path d="M6.500 7h8v9h-8z" fill="#dcebd5" /><path d="M7.500 7.500l6 8M13.500 7.500l-6 8" stroke="#1e5a20" strokeWidth="2.300" /></g>
  ),
};
const Logo = ({ name }) => <Svg w={24} h={24}>{logos[name]}</Svg>;

/* ---------- composed pieces ---------- */
const Group = ({ name, w, pl, launcher, children }) => (
  <GroupBox $w={w}>
    <GroupBody $pl={pl}>{children}</GroupBody>
    <GroupFooter>
      <FooterName $launcher={launcher}><Label>{name}</Label></FooterName>
      {launcher && <Launcher />}
    </GroupFooter>
  </GroupBox>
);
const Big = ({ icon, lines, w, ml, pt }) => (
  <BigButton $w={w} $ml={ml} $pt={pt}>
    <BigIcon>{icon}</BigIcon>
    <BigLine><Label>{lines[0]}</Label></BigLine>
    <BigLine>{lines[1] && <Label>{lines[1]}</Label>}<Caret /></BigLine>
  </BigButton>
);

const tabs = [["Home", 53], ["Insert", 63], ["Page Layout", 88], ["Formulas", 77], ["Data", 54], ["Review", 64], ["View", 54]];
const styles = [
  { t: "Normal", $bg: "#fff", $fg: "#000", $outline: "3px solid #f3bd62", $radius: 1, $shadow: "0 0 0 4px #9c8355" },
  { t: "Bad", $bg: "#ffc7ce", $fg: "#9c0006" },
  { t: "Good", $bg: "#c6efce", $fg: "#006100" },
  { t: "Neutral", $bg: "#ffeb9c", $fg: "#9c6500", ls: 0.15 },
  { t: "Calculation", $bg: "#f2f2f2", $fg: "#fa7d00", $border: "1px solid #7f7f7f", $weight: 700, ls: -0.45 },
  { t: "Check Cell", $bg: "#a5a5a5", $fg: "#fff", $border: "3px double #3f3f3f", $weight: 700, ls: -0.4, $pl: 1 },
  { t: "Explanatory ...", $bg: "#fff", $fg: "#7f7f7f", $style: "italic", ls: 0.4 },
  { t: "Input", $bg: "#ffcc99", $fg: "#3f3f76", $border: "1px solid #7f7f7f", ls: 0.1 },
  { t: "Linked Cell", $bg: "#fff", $fg: "#fa7d00", $border: "0", $pl: 4, $shadow: "inset 0 -1px #fa7d00, inset 0 -2px #fff, inset 0 -3px #fa7d00" },
  { t: "Note", $bg: "#ffffcc", $fg: "#000", $border: "1px solid #b2b2b2" },
];
const columns = "ABCDEFGHIJKL".split("");
const rows = Array.from({ length: 17 }, (_, i) => i + 1);
const tasks = [["view"], ["folder"], ["firefox"], ["chrome"], ["spring"], ["vscode"], ["dolphin"], ["notepad", 1], ["magnify"], ["zoom", 1], ["postman"], ["paint", 1], ["excel", 0, 1]];

const TabPoly = ({ w, on }) => (
  <TabShape width={w + 14} height="16">
    <path d={`M-7 15.500L6 .5H${w + 12}L${w - 1} 15.500z`} fill={on ? "#f4f9ff" : "#c3daf7"} stroke="#6f93c7" />
    <path d={`M-4 14.500L7 1.500H${w + 10}`} fill="none" stroke="#fff" />
  </TabShape>
);

export default function App() {
  return (
    <Screen>
      <Global />
      <TitleBar>
        <QuickAccess />
        <WindowControls>
          <Svg w={11} h={11}><path d="M0 5.500h10" stroke="#8c8c8c" /></Svg>
          <Svg w={11} h={11}><path d="M.5 2.500h7v7h-7zM3 2.500V.500h7v7H8" fill="none" stroke="#8c8c8c" /></Svg>
          <Svg w={11} h={11}><path d="M.5.500l10 10M10.500.500l-10 10" stroke="#8c8c8c" /></Svg>
        </WindowControls>
      </TitleBar>

      <TabBar>
        {tabs.map(([t, w], i) => <Tab key={t} $w={w} $active={i === 0}><Label>{t}</Label></Tab>)}
        <MdiControls>
          <HelpBadge>
            <Svg w={14} h={14}><circle cx="7" cy="7" r="6.300" fill="#2463cf" stroke="#fff" /><circle cx="7" cy="7" r="6.900" fill="none" stroke="#456fae" strokeWidth=".7" /><text x="4.500" y="11" fontSize="10" fontWeight="700" fill="#fff" fontFamily="Open Sans, sans-serif">?</text></Svg>
          </HelpBadge>
          <Svg w={8} h={10}><path d="M1 8h6.500" stroke="#5f6b7b" strokeWidth="2" /></Svg>
          <MdiGlyph><Svg w={10} h={10}><path d="M.5 3.500h6.500v4H.5zM2 1.500h7v4" fill="none" stroke="#6c7787" /><path d="M0 3.500h7M2 1h8" stroke="#6c7787" strokeWidth="1.600" /></Svg></MdiGlyph>
          <MdiGlyph><Svg w={9} h={10}><path d="M1 1.500l7 7M8 1.500l-7 7" stroke="#6c7787" strokeWidth="2" /></Svg></MdiGlyph>
        </MdiControls>
      </TabBar>

      <RibbonWrap>
        <Ribbon>
          <Group name="Clipboard" w={151} launcher>
            <Big icon={<PasteIcon />} lines={["Paste"]} w={47} pt={5} />
            <SmallRows $ml={2}>
              <SmallRow><IconSlot $w={19}><Svg w={3} h={1} /><CutIcon /></IconSlot><Label>Cut</Label></SmallRow>
              <SmallRow><IconSlot $w={19}><CopyIcon /></IconSlot><Label>Copy</Label></SmallRow>
              <SmallRow><IconSlot $w={19}><PainterIcon /></IconSlot><Label $ls={-0.18}>Format Painter</Label></SmallRow>
            </SmallRows>
          </Group>

          <Group name="Font" w={196} pl={3} launcher>
            <Controls>
              <ControlRow $gap={0}>
                <Combo $w={97}><Label>Calibri</Label><Caret /></Combo>
                <Combo $w={43} $mr={3}><Label>11</Label><Caret /></Combo>
                <ButtonGroup>
                  <ToolButton $w={22} $gap={0} $font="bold 16px 'Liberation Serif', serif">A<Svg w={5} h={14}><path d="M0 3h5L2.500 0z" fill="#2c5fb3" /></Svg></ToolButton>
                  <ToolButton $w={22} $gap={1} $font="bold 12px 'Liberation Serif', serif">A<Svg w={5} h={14}><path d="M0 1h5L2.500 4z" fill="#2c5fb3" /></Svg></ToolButton>
                </ButtonGroup>
              </ControlRow>
              <ControlRow>
                <ButtonGroup>
                  <ToolButton $w={22}>B</ToolButton>
                  <ToolButton $w={23}><i>I</i></ToolButton>
                  <ToolButton $w={34} $gap={8}><u>U</u><Caret /></ToolButton>
                </ButtonGroup>
                <ButtonGroup><ToolButton $w={33} $gap={7}><BorderIcon /><Caret /></ToolButton></ButtonGroup>
                <ButtonGroup>
                  <ToolButton $w={33} $gap={5}><FillIcon /><Caret /></ToolButton>
                  <ToolButton $w={32} $gap={6}><FontColour>A</FontColour><Caret /></ToolButton>
                </ButtonGroup>
              </ControlRow>
            </Controls>
          </Group>

          <Group name="Alignment" w={251} pl={3} launcher>
            <Controls>
              <ControlRow>
                <ButtonGroup>
                  <ToolButton $w={22}><Lines rows={[[0, 1, 14], [2, 4, 11], [0, 7, 14]]} h={16} /></ToolButton>
                  <ToolButton $w={23}><Lines rows={[[0, 5, 14], [2, 8, 11], [0, 11, 14]]} h={16} /></ToolButton>
                  <ToolButton $w={22} $on><Lines rows={[[0, 8, 14], [2, 11, 11], [0, 14, 14]]} h={16} /></ToolButton>
                </ButtonGroup>
                <ButtonGroup><ToolButton $w={30} $gap={1}><OrientIcon /><Caret /></ToolButton></ButtonGroup>
              </ControlRow>
              <ControlRow>
                <ButtonGroup>
                  <ToolButton $w={22}><Lines rows={[[0, 1, 14], [0, 4, 9], [0, 7, 14], [0, 10, 9]]} h={14} /></ToolButton>
                  <ToolButton $w={23}><Lines rows={[[0, 1, 14], [2, 4, 10], [0, 7, 14], [2, 10, 10]]} h={14} /></ToolButton>
                  <ToolButton $w={22}><Lines rows={[[0, 1, 14], [5, 4, 9], [0, 7, 14], [5, 10, 9]]} h={14} /></ToolButton>
                </ButtonGroup>
                <ButtonGroup>
                  <ToolButton $w={22}><IndentIcon /></ToolButton>
                  <ToolButton $w={22}><IndentIcon right /></ToolButton>
                </ButtonGroup>
              </ControlRow>
            </Controls>
            <Divider />
            <WrapColumn>
              <SmallRow><IconSlot $w={19}><WrapIcon /></IconSlot><Label $ls={-0.25}>Wrap Text</Label></SmallRow>
              <SmallRow><IconSlot $w={19}><MergeIcon /></IconSlot><Label $ls={-0.05}>Merge &amp; Center</Label><Svg w={6} h={1} /><Caret /></SmallRow>
            </WrapColumn>
          </Group>

          <Group name="Number" w={136} pl={3} launcher>
            <Controls>
              <ControlRow><Combo $w={128}><Label>General</Label><Caret /></Combo></ControlRow>
              <ControlRow>
                <ButtonGroup>
                  <ToolButton $w={33} $gap={10} $pl={3} $font="bold 14px 'Liberation Serif', serif">$<Caret /></ToolButton>
                  <ToolButton $w={24} $font={`14px ${UI}`}>%</ToolButton>
                  <ToolButton $w={21} $pb={8} $font="bold 20px/8px 'Liberation Serif', serif">,</ToolButton>
                </ButtonGroup>
                <ButtonGroup>
                  <ToolButton $w={22}><DecimalIcon inc /></ToolButton>
                  <ToolButton $w={21}><DecimalIcon /></ToolButton>
                </ButtonGroup>
              </ControlRow>
            </Controls>
          </Group>

          <Group name="Styles" w={683}>
            <Big icon={<CondIcon />} lines={["Conditional", "Formatting"]} w={66} ml={4} pt={6} />
            <Big icon={<TableIcon />} lines={["Format", "as Table"]} w={56} ml={1} pt={6} />
            <Gallery>
              <Swatches>
                {styles.map(({ t, ls, ...p }) => (
                  <Swatch key={t} {...p}><Label $ls={ls ?? -0.05}>{t}</Label></Swatch>
                ))}
              </Swatches>
              <GalleryScroll>
                <ScrollCell $off><Svg w={5} h={3}><path d="M0 3h5L2.500 0z" fill="#a5a9b0" /></Svg></ScrollCell>
                <ScrollCell><Caret c="#3f6fb5" /></ScrollCell>
                <ScrollCell><Svg w={7} h={6}><path d="M0 .5h7" stroke="#3f6fb5" /><path d="M1 3h5L3.500 6z" fill="#3f6fb5" /></Svg></ScrollCell>
              </GalleryScroll>
            </Gallery>
          </Group>

          <Group name="Cells" w={134}>
            <Big icon={<InsertIcon />} lines={["Insert"]} w={44} ml={1} pt={6} />
            <Big icon={<InsertIcon del />} lines={["Delete"]} w={40} pt={6} />
            <Big icon={<FormatIcon />} lines={["Format"]} w={45} pt={6} />
          </Group>

          <Group name="Editing" w={176} pl={7}>
            <SmallRows>
              <SmallRow>
                <IconSlot $w={18}><Svg w={12} h={11}><path d="M10 3V1H2l4 4.500L2 10h8V8" fill="none" stroke="#000" strokeWidth="1.600" /></Svg></IconSlot>
                <Label $ls={-0.05}>AutoSum</Label><Svg w={6} h={1} /><Caret />
              </SmallRow>
              <SmallRow><IconSlot $w={18}><FillDown /></IconSlot><Label>Fill</Label><Svg w={5} h={1} /><Caret /></SmallRow>
              <SmallRow><IconSlot $w={18}><EraserIcon /></IconSlot><Label>Clear</Label><Svg w={5} h={1} /><Caret /></SmallRow>
            </SmallRows>
            <Big icon={<SortIcon />} lines={["Sort &", "Filter"]} w={42} ml={3} pt={6} />
            <Big icon={<BinocularIcon />} lines={["Find &", "Select"]} w={42} pt={6} />
          </Group>
        </Ribbon>
      </RibbonWrap>

      <FormulaBar>
        <NameBox><Label>C4</Label><Svg w={7} h={4}><path d="M0 0h7L3.500 4z" fill="#000" /></Svg></NameBox>
        <FxArea><FxPill><FxDot /><span>f<FxSub>x</FxSub></span></FxPill></FxArea>
        <FormulaInput><Label $ls={0.1}>Hello</Label></FormulaInput>
        <ExpandButton>
          <Svg w={8} h={9}><path d="M.5.500L4 3.500 7.500.5M.5 5L4 8l3.500-3" fill="none" stroke="#000" strokeWidth="1.500" /></Svg>
        </ExpandButton>
      </FormulaBar>

      <SheetArea>
        <Grid>
          <HeaderRow>
            <Corner><Svg w={58} h={40}><path d="M55 3v35H20z" fill="#eef0f4" /></Svg></Corner>
            {columns.map((c) => <ColumnHead key={c}>{c}</ColumnHead>)}
          </HeaderRow>
          {rows.map((r) => (
            <GridRow key={r}>
              <RowHead>{r}</RowHead>
              {columns.map((c) => <Cell key={c}>{r === 4 && c === "C" ? "Hello" : ""}</Cell>)}
              <Cell />
            </GridRow>
          ))}
        </Grid>
        <VScroll>
          <VSplit />
          <ArrowSlot $h={17} $w={15}><Svg w={9} h={5}><path d="M0 5h9L4.500 0z" fill="#3e4f78" /></Svg></ArrowSlot>
          <VThumb><GripV /></VThumb>
          <ArrowSlot $h={158} $w={15} />
          <ArrowSlot $h={18} $w={15}><Svg w={9} h={5}><path d="M0 0h9L4.500 5z" fill="#3e4f78" /></Svg></ArrowSlot>
        </VScroll>
      </SheetArea>

      <TabStrip>
        <SheetNav><NavArrow bar /><NavArrow /><NavArrow flip /><NavArrow flip bar /></SheetNav>
        <SheetTab $w={60} $pl={10} $z={5} $on><TabPoly w={60} on /><Label $ls={-0.1}>Sheet1</Label></SheetTab>
        <SheetTab $w={60} $pl={12} $z={4}><TabPoly w={60} /><Label $ls={0}>Sheet2</Label></SheetTab>
        <SheetTab $w={60} $pl={12} $z={3}><TabPoly w={60} /><Label $ls={0}>Sheet3</Label></SheetTab>
        <SheetTab $w={32} $pl={12} $z={2}><TabPoly w={32} /><NewSheetIcon /></SheetTab>
        <HScroll>
          <HSplit />
          <ArrowSlot $h={16} $w={18}><Svg w={5} h={9}><path d="M5 0v9L0 4.500z" fill="#3e4f78" /></Svg></ArrowSlot>
          <HThumb><GripH /></HThumb>
          <ArrowSlot $h={16} $w={118} />
          <ArrowSlot $h={16} $w={18}><Svg w={5} h={9}><path d="M0 0v9l5-4.500z" fill="#3e4f78" /></Svg></ArrowSlot>
          <HSplit />
          <CornerFill />
        </HScroll>
      </TabStrip>

      <StatusBar>
        <StatusText><Label $ls={0}>Ready</Label></StatusText>
        <StatusRight>
          <ViewButtons>
            <ViewButton $on><Svg w={14} h={11}><path d="M.5.500h13v10H.5zM0 4h14M0 7h14M5 0v11M9 0v11" fill="#fff" stroke="#6a6a6a" /></Svg></ViewButton>
            <ViewButton><Svg w={13} h={12}><path d="M.5.500h12v11H.5z" fill="#9c9c9c" stroke="#666" /><path d="M3.500 2.500h6v7h-6z" fill="#fff" stroke="#666" /><path d="M5 4.500h3M5 6h3M5 7.500h3" stroke="#777" strokeWidth=".8" /></Svg></ViewButton>
            <ViewButton><Svg w={13} h={12}><path d="M.5.500h12v11H.5z" fill="#aaa" stroke="#666" /><path d="M1.500 1h3v6h-3zM6 1h2.500v6H6z" fill="#fff" /></Svg></ViewButton>
          </ViewButtons>
          <Zoom><Label $ls={0}>235%</Label></Zoom>
          <RoundZoom />
          <Svg w={102} h={16}>
            <path d="M0 8h102" stroke="#4f77ad" /><path d="M0 9h102" stroke="#e4eefb" />
            <path d="M51.500 4v8" stroke="#e4eefb" />
            <path d="M66 1.500h8v8l-4 4-4-4z" fill="#e6edf6" stroke="#4d6591" /><path d="M70 4v6" stroke="#4d6591" />
          </Svg>
          <RoundZoom plus />
        </StatusRight>
      </StatusBar>

      <TaskBar>
        <StartButton>
          <Svg w={16} h={16}><path d="M0 2.200l6.500-.9v6.200H0zM7.300 1.200L16 0v7.500H7.300zM0 8.300h6.500v6.300L0 13.700zM7.300 8.300H16V16l-8.700-1.200z" fill="#fff" /></Svg>
        </StartButton>
        <SearchBox>
          <Svg w={22} h={22}><circle cx="11" cy="11" r="9" fill="none" stroke="#0a0a0a" strokeWidth="2.600" /></Svg>
          <SearchText>Search</SearchText>
          <Svg w={11} h={17}><path d="M3 .7h5v10H3z" fill="none" stroke="#333" strokeWidth="1.300" /><path d="M.7 7v6h9.600V7M5.500 13v3M2.500 16.300h6" fill="none" stroke="#333" strokeWidth="1.200" /></Svg>
        </SearchBox>
        <Tasks>
          {tasks.map(([n, run, act]) => <Task key={n} $wide={n === "view"} $running={!!run} $active={!!act}><Logo name={n} /></Task>)}
        </Tasks>
        <Tray>
          <TraySlot $w={14} $mr={14}>
            <Svg w={14} h={15}><g fill="none" stroke="#fff" strokeWidth="1.200"><circle cx="4" cy="7.500" r="2" /><path d="M.6 14.500c0-6 6.800-6 6.800 0" /><circle cx="10" cy="2.700" r="2.100" /><path d="M7.200 7c2-3 6.200-1.500 6.200 2.500" /></g></Svg>
          </TraySlot>
          <TraySlot $w={29}><Svg w={12} h={7}><path d="M.5 6.500L6 1l5.500 5.500" fill="none" stroke="#fff" strokeWidth="1.300" /></Svg></TraySlot>
          <TraySlot $w={20}><Svg w={16} h={16}><circle cx="8" cy="8" r="7.500" fill="#f7d21b" stroke="#8db52a" /><path d="M1 5a7.500 7.500 0 0 1 7-4.500M15 11a7.500 7.500 0 0 1-7 4.500" stroke="#2f9a2f" strokeWidth="2" fill="none" /><path d="M8 4v8M4 8h8" stroke="#2f8f2b" strokeWidth="2.600" /></Svg></TraySlot>
          <TraySlot $w={29}><Svg w={16} h={14}><path d="M5 2.500h10.500v8H4M9 10.500v3M5.500 13.300h8M.5 1h4v3h-4zM2.500 4v6" fill="none" stroke="#fff" strokeWidth="1.100" /></Svg></TraySlot>
          <TraySlot $w={17}><Svg w={16} h={14}><path d="M.6 4.500h2.500L6.500 1v12L3.100 9.500H.6z" fill="none" stroke="#fff" strokeWidth="1.100" /><path d="M8.500 5q1.500 2 0 4" fill="none" stroke="#fff" /><path d="M10.500 3q3 4 0 8" fill="none" stroke="#aaa" /><path d="M12.500 1q4.500 6 0 12" fill="none" stroke="#666" /></Svg></TraySlot>
          <Clock>7:43 AM<br />16-May-21</Clock>
          <TraySlot $w={34}><Svg w={17} h={16}><path d="M.6.600h15.800v11.900H11L8.500 15 6 12.500H.6z" fill="none" stroke="#fff" strokeWidth="1.200" /></Svg></TraySlot>
          <DesktopEdge />
        </Tray>
      </TaskBar>

      <OfficeButton><OfficeOrb /></OfficeButton>
      <ShareShadow />
      <ShareBar>
        <ShareGreen>
          <Svg w={10} h={11}><path d="M9.500 0C5 0 2.500 2 3 5.500H0L4.500 11 8 6.500H6C5.500 4 6.500 2 9.500 0z" fill="#0b5c1f" /></Svg>
          <Svg w={33} h={1} />
          <Label $ls={-0.45}>You are screen sharing</Label>
          <Svg w={35} h={1} />
          <Svg w={16} h={11}><path d="M4 10.300C0 10.300 0 6 3 5.500 4 0 10 0 11.500 3.500 16 4 16 10 12.500 10.300z" fill="none" stroke="#157a33" strokeWidth="1.300" /><circle cx="8" cy="6.500" r="2.300" fill="#f04b38" /></Svg>
          <Svg w={9} h={1} />
          <Svg w={11} h={12}><path d="M5.500 0L11 2c0 5-1.500 8-5.500 10C1.500 10 0 7 0 2z" fill="#14542a" /><path d="M3 5.500L5 7.500l3.500-4" fill="none" stroke="#22d959" strokeWidth="1.500" /></Svg>
        </ShareGreen>
        <ShareRed><StopSquare /><Label $ls={-0.2}>Stop Share</Label></ShareRed>
      </ShareBar>

      <Ink width="1920" height="1080">
        <g fill="none" stroke="#0000ff" strokeWidth="6" strokeLinecap="round" strokeLinejoin="round">
          <path d="M116 198H726" />
          <path d="M139 365l2 4 9-3.500h11l10 7.500v21l-13 .5-18-7-8-4.500v-11l7-6" />
          <path d="M254.500 368.500l4.500 7.500 7 8" />
          <path d="M454 372l-6 4h-12l-2-5 3-6h26l8 8v14" />
          <path d="M453 388.500h15" strokeWidth="8" />
          <path d="M468 388l18 .5 4-4" />
        </g>
      </Ink>
      <InkText>
        <InkLine $ls={0.25}>Row-3</InkLine>
        <InkLine $ls={-0.3}>cell-2|</InkLine>
      </InkText>
    </Screen>
  );
}
